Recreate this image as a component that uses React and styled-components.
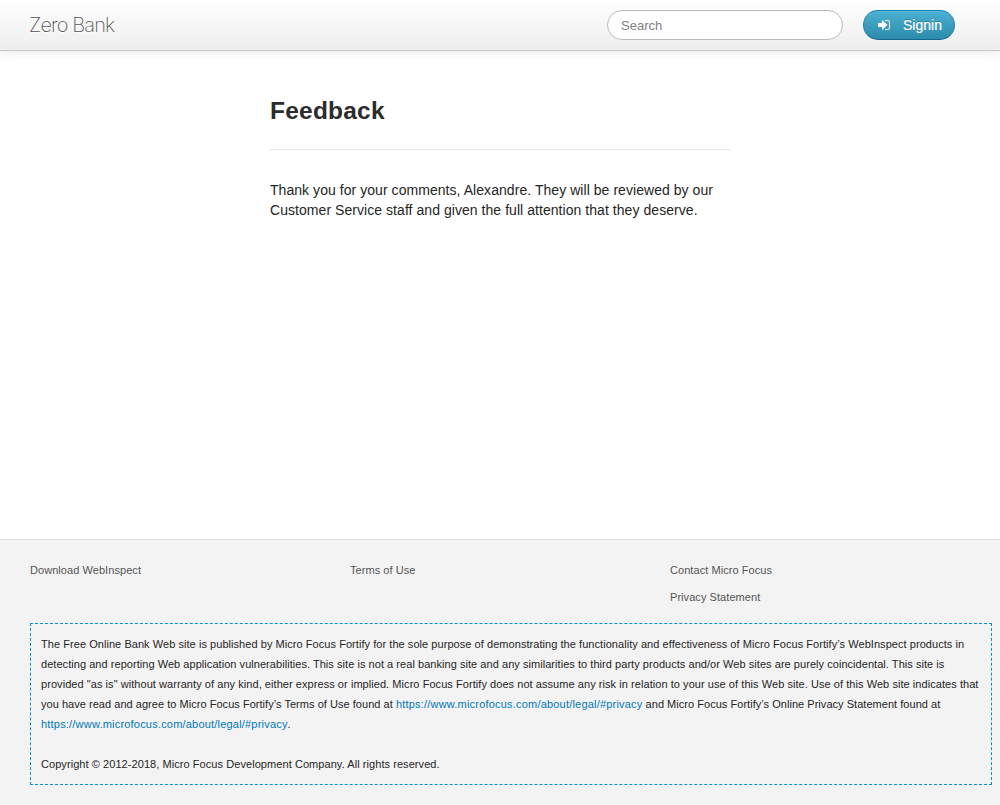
import React from "react";
import styled, { createGlobalStyle } from "styled-components";

const GlobalStyle = createGlobalStyle`
  * { box-sizing: border-box; }
  body {
    margin: 0;
    background: #fff;
    color: #252525;
    font: 14px/20px "Liberation Sans", Helvetica, Arial, sans-serif;
  }
`;

const Page = styled.div`
  display: flex;
  flex-direction: column;
  height: 805px;
  overflow: hidden;
`;

const Navbar = styled.header`
  display: flex;
  align-items: center;
  flex: none;
  height: 51px;
  padding: 0 45px 0 29px;
  background: linear-gradient(to bottom, #ffffff, #eeeeee);
  border-bottom: 1px solid #c9c9c9;
  box-shadow: 0 1px 10px rgba(0, 0, 0, 0.1);
`;

const Brand = styled.a`
  margin-right: auto;
  font-family: Inter, "Liberation Sans", sans-serif;
  font-size: 20px;
  font-weight: 200;
  letter-spacing: -0.88px;
  color: #555;
  text-shadow: 0 1px 0 #fff;
`;

const Search = styled.input`
  width: 236px;
  height: 30px;
  margin: 0 20px 0 0;
  padding: 4px 13px;
  border: 1px solid #bbb;
  border-radius: 15px;
  background: #fff;
  font: 13px/20px "Liberation Sans", Arial, sans-serif;
  outline: none;
  &::placeholder { color: #808080; opacity: 1; }
`;

const SigninButton = styled.button`
  display: flex;
  align-items: center;
  gap: 11px;
  width: 92px;
  height: 30px;
  padding: 0 0 0 14px;
  border: 1px solid;
  border-color: #0d83b5 #2783a4 #13698f;
  border-radius: 15px;
  background: linear-gradient(to bottom, #4bb1d3, #2d8bab);
  box-shadow: inset 0 1px 0 rgba(255, 255, 255, 0.1);
  color: #fff;
  font: 14px/20px "Liberation Sans", Arial, sans-serif;
  -webkit-text-stroke: 0.2px #fff;
  text-shadow: 0 -1px 0 rgba(0, 0, 0, 0.25);
`;

const Main = styled.main`
  flex: none;
  width: 460px;
  height: 488px;
  margin: 0 auto;
  padding-top: 40px;
`;

const Title = styled.h3`
  margin: 0;
  height: 59px;
  border-bottom: 1px solid #e7e7e7;
  font-size: 24.5px;
  line-height: 40px;
  font-weight: bold;
  letter-spacing: 0.22px;
  color: #2c2c2c;
`;

const Message = styled.p`
  margin: 30px 0 0;
  letter-spacing: 0.053px;
  white-space: nowrap;
`;

const Footer = styled.footer`
  flex: 1;
  padding: 20px 8px 0 30px;
  border-top: 1px solid #dedede;
  background: #f3f3f3;
  font-size: 11px;
`;

const LinkColumns = styled.nav`
  display: grid;
  grid-template-columns: repeat(3, 320px);
  height: 63px;
`;

const LinkList = styled.ul`
  display: flex;
  flex-direction: column;
  gap: 7px;
  margin: 0;
  padding: 0;
  list-style: none;
  letter-spacing: 0.06px;
  color: #555;
`;

const Disclaimer = styled.div`
  height: 162px;
  padding: 10px;
  border: 1px dashed #088fd0;
  white-space: nowrap;
`;

const Line = styled.div`
  height: 20px;
  letter-spacing: ${(p) => p.$spacing || 0}px;
`;

const Link = styled.a`
  letter-spacing: 0.2px;
  color: #0078b8;
`;

const SigninIcon = () => (
  <svg width="14" height="14" viewBox="0 0 1792 1792" fill="currentColor" aria-hidden="true">
    <path d="M1184 896q0 26-19 45l-544 544q-19 19-45 19t-45-19-19-45v-288h-448q-26 0-45-19t-19-45v-384q0-26 19-45t45-19h448v-288q0-26 19-45t45-19 45 19l544 544q19 19 19 45zm352-352v704q0 119-84.500 203.500t-203.500 84.500h-320q-13 0-22.500-9.500t-9.500-22.500q0-4-1-20t-.5-26.500 3-23.500 10-19.500 20.500-6.500h320q66 0 113-47t47-113v-704q0-66-47-113t-113-47h-312l-11.500-1-11.500-3-8-5.500-7-9-2-13.500q0-4-1-20t-.5-26.500 3-23.500 10-19.500 20.500-6.500h320q119 0 203.500 84.500t84.500 203.500z" />
  </svg>
);

const columns = [
  ["Download WebInspect"],
  ["Terms of Use"],
  ["Contact Micro Focus", "Privacy Statement"],
];

const privacyUrl = "https://www.microfocus.com/about/legal/#privacy";

export default function App() {
  return (
    <>
      <GlobalStyle />
      <Page>
        <Navbar>
          <Brand>Zero Bank</Brand>
          <Search placeholder="Search" />
          <SigninButton>
            <SigninIcon />
            Signin
          </SigninButton>
        </Navbar>
        <Main>
          <Title>Feedback</Title>
          <Message>
            Thank you for your comments, Alexandre. They will be reviewed by our
            <br />
            Customer Service staff and given the full attention that they deserve.
          </Message>
        </Main>
        <Footer>
          <LinkColumns>
            {columns.map((items) => (
              <LinkList key={items[0]}>
                {items.map((item) => (
                  <li key={item}>{item}</li>
                ))}
              </LinkList>
            ))}
          </LinkColumns>
          <Disclaimer>
            <Line $spacing={0.053}>
              The Free Online Bank Web site is published by Micro Focus Fortify for the sole purpose of demonstrating the functionality and effectiveness of Micro Focus Fortify’s WebInspect products in
            </Line>
            <Line $spacing={0.047}>
              detecting and reporting Web application vulnerabilities. This site is not a real banking site and any similarities to third party products and/or Web sites are purely coincidental. This site is
            </Line>
            <Line $spacing={0.057}>
              provided "as is" without warranty of any kind, either express or implied. Micro Focus Fortify does not assume any risk in relation to your use of this Web site. Use of this Web site indicates that
            </Line>
            <Line $spacing={0.035}>
              you have read and agree to Micro Focus Fortify’s Terms of Use found at <Link>{privacyUrl}</Link> and Micro Focus Fortify’s Online Privacy Statement found at
            </Line>
            <Line>
              <Link>{privacyUrl}</Link>.
            </Line>
            <Line />
            <Line $spacing={0.065}>Copyright © 2012-2018, Micro Focus Development Company. All rights reserved.</Line>
          </Disclaimer>
        </Footer>
      </Page>
    </>
  );
}
